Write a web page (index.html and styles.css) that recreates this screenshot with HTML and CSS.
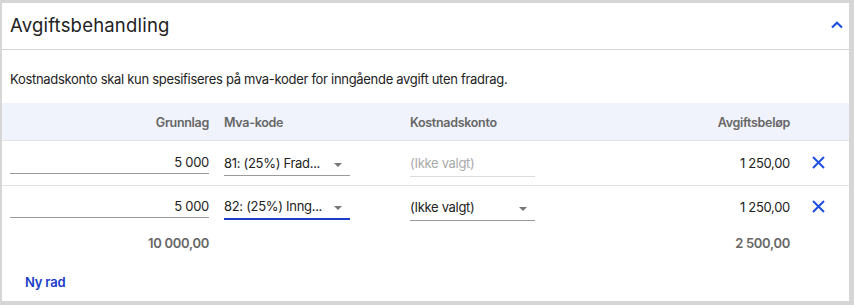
FILE: index.html
```html
<!DOCTYPE html>
<html lang="no">
<head>
<meta charset="utf-8">
<title>Avgiftsbehandling</title>
<link rel="stylesheet" href="styles.css">
</head>
<body>
<section class="card">
  <header class="card-head">
    <h2 class="title">Avgiftsbehandling</h2>
    <button class="collapse" aria-label="Skjul">
      <svg width="12" height="8" viewBox="0 0 12 8"><path d="M1 6.5 L6 1.8 L11 6.5" fill="none" stroke="#1f4fe0" stroke-width="2.2"/></svg>
    </button>
  </header>
  <p class="desc">Kostnadskonto skal kun spesifiseres på mva-koder for inngående avgift uten fradrag.</p>
  <div class="grid head-row">
    <div class="c1">Grunnlag</div>
    <div class="c2">Mva-kode</div>
    <div class="c3">Kostnadskonto</div>
    <div class="c4">Avgiftsbeløp</div>
    <div class="c5"></div>
  </div>
  <div class="grid row">
    <div class="c1"><div class="field num">5 000</div></div>
    <div class="c2"><div class="field select"><span class="val">81: (25%) Frad...</span><span class="arrow"></span></div></div>
    <div class="c3"><div class="field select disabled"><span class="val">(Ikke valgt)</span></div></div>
    <div class="c4 amount">1 250,00</div>
    <div class="c5"><svg class="x" width="13" height="13" viewBox="0 0 13 13"><path d="M1 1 L12 12 M12 1 L1 12" stroke="#1f4fe0" stroke-width="2"/></svg></div>
  </div>
  <div class="grid row last">
    <div class="c1"><div class="field num">5 000</div></div>
    <div class="c2"><div class="field select focus"><span class="val">82: (25%) Inng...</span><span class="arrow"></span></div></div>
    <div class="c3"><div class="field select"><span class="val">(Ikke valgt)</span><span class="arrow"></span></div></div>
    <div class="c4 amount">1 250,00</div>
    <div class="c5"><svg class="x" width="13" height="13" viewBox="0 0 13 13"><path d="M1 1 L12 12 M12 1 L1 12" stroke="#1f4fe0" stroke-width="2"/></svg></div>
  </div>
  <div class="grid totals">
    <div class="c1">10 000,00</div>
    <div class="c2"></div>
    <div class="c3"></div>
    <div class="c4">2 500,00</div>
    <div class="c5"></div>
  </div>
  <a class="add" href="#">Ny rad</a>
</section>
</body>
</html>
```
FILE: styles.css
```css
* { box-sizing: border-box; }
html, body { margin: 0; padding: 0; }
body {
  background: #d6d6d6;
  font-family: Inter, "Liberation Sans", sans-serif;
  color: #222;
  width: 854px;
  height: 305px;
  padding: 3px 5px 4px 2px;
}
.card {
  background: #fff;
  height: 298px;
  display: flex;
  flex-direction: column;
}
.card-head {
  height: 47px;
  border-bottom: 1px solid #d4d4d4;
  display: flex;
  align-items: center;
  justify-content: space-between;
  padding: 0 4px 0 8px;
}
.title {
  margin: 0;
  font-size: 18.5px;
  font-weight: 400;
  letter-spacing: 0.2px;
  padding-bottom: 2px;
}
.collapse {
  background: none;
  border: 0;
  padding: 0;
  width: 16px;
  height: 16px;
  display: flex;
  align-items: center;
  justify-content: center;
  margin-bottom: 3px;
}
.desc {
  margin: 0;
  height: 53px;
  padding: 21px 8px 0;
  font-size: 13px;
  letter-spacing: -0.3px;
  line-height: 16px;
}
.grid {
  display: grid;
  grid-template-columns: 214px 186px 1fr 120px 59px;
  padding-left: 8px;
  align-items: center;
  letter-spacing: -0.3px;
}
.c1 { padding-right: 15px; text-align: right; }
.c4 { text-align: right; }
.head-row {
  background: #f0f3fc;
  height: 38px;
  border-bottom: 1px solid #e2e2e2;
  font-size: 12.5px;
  font-weight: 600;
  color: #666;
  padding-top: 1px;
}
.row {
  height: 45px;
  border-bottom: 1px solid #e2e2e2;
  font-size: 13px;
  align-items: start;
}
.row.last { border-bottom: 0; height: 44px; }
.row > div { padding-top: 9px; }
.row .c4 { padding-top: 14px; }
.row .c5 { padding-top: 15px; padding-left: 22px; }
.row.last > .c1, .row.last > .c2, .row.last > .c3 { padding-top: 8px; }
.row.last > .c4 { padding-top: 13px; }
.row.last > .c5 { padding-top: 14px; }
.field {
  height: 24px;
  border-bottom: 1px solid #9a9a9a;
  display: flex;
  align-items: center;
  line-height: 16px;
}
.field.num { justify-content: flex-end; }
.select {
  width: 126px;
  height: 26px;
  justify-content: space-between;
  padding-right: 8px;
}
.c3 .select { width: 125px; }
.select.disabled { border-bottom-color: #dcdcdc; color: #aaa; }
.select.focus { border-bottom: 2px solid #1a3cc8; height: 26px; }
.c3 .select { height: 27px; }
.arrow {
  width: 0;
  height: 0;
  border-left: 4px solid transparent;
  border-right: 4px solid transparent;
  border-top: 4px solid #777;
  margin-top: 4px;
}
.x { display: block; }
.totals {
  height: 26px;
  font-size: 13px;
  font-weight: 600;
  color: #666;
}
.add {
  margin: 18px 0 0 23px;
  font-size: 13px;
  font-weight: 600;
  color: #1a3cc8;
  text-decoration: none;
  letter-spacing: -0.2px;
}
```
